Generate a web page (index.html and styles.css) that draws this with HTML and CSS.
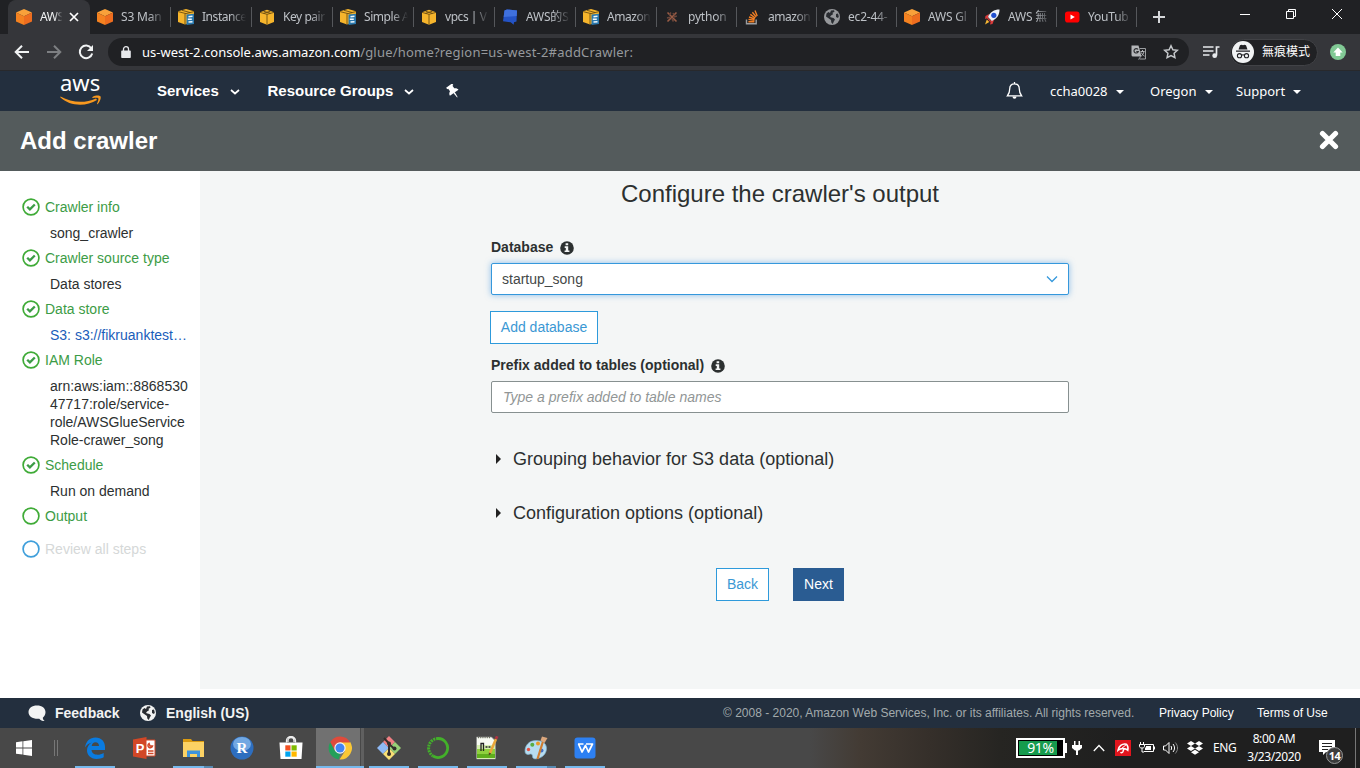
FILE: index.html
```html
<!DOCTYPE html>
<html lang="en">
<head>
<meta charset="utf-8">
<title>AWS Glue Console</title>
<link rel="stylesheet" href="styles.css">
</head>
<body>
<svg class="defs" aria-hidden="true">
  <symbol id="cube" viewBox="0 0 16 16"><path fill="#f9a13a" d="M8 0l8 3.500L8 7.200 0 3.500z"/><path fill="#f58220" d="M0 3.500l8 3.700V16l-8-3.400z"/><path fill="#ee6d1f" d="M16 3.500L8 7.200V16l8-3.400z"/></symbol>
  <symbol id="box" viewBox="0 0 16 16"><path fill="#f6b52c" d="M8 .8l7 2.400v9.900l-7 2.600-7-2.600V3.200z"/><path fill="none" stroke="#5d4310" stroke-width=".8" d="M1 3.400l7 1.900 7-1.900M8 5.300v10.200M4.500 2.200l7 2.100M11.500 2.200l-7 2.100"/></symbol>
  <symbol id="boxdoc" viewBox="0 0 16 16"><path fill="#f6b52c" d="M8 0l8 2.300V12L7 15.500 0 13V2.300z"/><path fill="none" stroke="#5d4310" stroke-width=".8" d="M0 2.600l8 2 8-2M7 4.600v10.500M4 1.300l8 2.200"/><path fill="#2a78ad" d="M8.500 5.500l7.500-.8V15l-7.500 1z"/><path stroke="#f2f9fd" stroke-width="1.500" d="M10.500 7.700l4-.4M9.800 10.300h4M10.500 13l4-.3"/></symbol>
  <symbol id="done" viewBox="0 0 18 18"><circle cx="9" cy="9" r="7.900" fill="none" stroke="#3fab37" stroke-width="1.700"/><path fill="none" stroke="#3c9c46" stroke-width="2.300" d="M5.200 8.700l2.700 2.700 4.900-4.900"/></symbol>
  <symbol id="info" viewBox="0 0 14 14"><circle cx="7" cy="7" r="6.800" fill="#2c3030"/><path fill="#f4f6f6" d="M5.600 2.300h2.600v2H5.600zM4.700 5.300h3.500v4.100h1.200v1.700H4.600V9.400h1.200V7H4.700z"/></symbol>
  <symbol id="globe" viewBox="0 0 16 16"><circle cx="8" cy="8" r="8" fill="currentColor"/><path class="land" d="M7 1.500l3-.3.500 1.500-2 1 .5 1.500-2 1.200-1 1.600 1.500.5 2 .4 1.500 1.600-1.200 2-1 2.500-1.500-1.500-.3-2.500-1.800-1.200L2 7.500l.5-3 2-1.500 1.500 1zM12 5l2-.5.8 3-.8 1.500-2-1z"/></symbol>
</svg>

<header class="browser">
  <div class="tabstrip">
    <div class="tab active"><svg class="fav"><use href="#cube"/></svg><span class="tab-title">AWS</span><svg class="tab-close" viewBox="0 0 10 10"><path d="M1 1l8 8M9 1L1 9"/></svg></div>
    <div class="tab"><svg class="fav"><use href="#cube"/></svg><span class="tab-title">S3 Man</span></div>
    <div class="tab"><svg class="fav"><use href="#boxdoc"/></svg><span class="tab-title snug">Instance</span></div>
    <div class="tab"><svg class="fav"><use href="#box"/></svg><span class="tab-title snug">Key pair</span></div>
    <div class="tab"><svg class="fav"><use href="#boxdoc"/></svg><span class="tab-title snug">Simple A</span></div>
    <div class="tab"><svg class="fav"><use href="#box"/></svg><span class="tab-title snug">vpcs | V</span></div>
    <div class="tab"><svg class="fav" viewBox="0 0 16 16"><path fill="#2453c5" d="M2.500 1.500L5 .5l10 1-.5 11-2.500.8-.3 2.500-3-2.500-7.700-1z"/><path fill="#3f70dd" d="M2.500 1.500L5 .5l10 1-.3 5.500L1.700 8z"/></svg><span class="tab-title">AWS的S</span></div>
    <div class="tab"><svg class="fav"><use href="#boxdoc"/></svg><span class="tab-title snug">Amazon</span></div>
    <div class="tab narrow"><svg class="fav" viewBox="0 0 16 16"><path fill="none" stroke="#9a5c45" stroke-width="1.600" d="M3.500 3.500l9 9M12.500 3.500l-9 9"/><path fill="none" stroke="#6b463b" stroke-width="1.500" d="M7 3.500l-2 2.500M12.800 7l-3 1M9.500 12.500L8 10M3 9l3-.8M9 4l1 2"/></svg><span class="tab-title">python</span></div>
    <div class="tab narrow"><svg class="fav" viewBox="0 0 16 16"><path fill="none" stroke="#9b9ea1" stroke-width="1.400" d="M2.500 10.500v4.300h9.700v-4.300"/><path stroke="#f48024" stroke-width="1.400" d="M4.400 12.700h6M4.500 10.400l6 .9M5 8l5.700 2M6.300 5.400l5 3.600M8.400 3.300l3.800 4.600M11 1.500l2.200 5.400"/></svg><span class="tab-title snug">amazon</span></div>
    <div class="tab narrow"><svg class="fav globe-tab"><use href="#globe"/></svg><span class="tab-title">ec2-44-</span></div>
    <div class="tab narrow"><svg class="fav"><use href="#cube"/></svg><span class="tab-title">AWS Gl</span></div>
    <div class="tab narrow"><svg class="fav" viewBox="0 0 16 16"><path fill="#d93a3a" d="M5 5L1.500 7 1 10l3-1zM10 11l-1.500 4-2.500.5 1-4z"/><path fill="#eef2f8" d="M15.500.5C10 .5 6 3 4 8l3.800 4C13 9.500 15.500 6 15.500.5z"/><path fill="#d93a3a" d="M3.800 8.500l3.500 3.600-1 1L3 9.500z"/><path fill="#f7b733" d="M2.800 10.500l2.500 2.500L1 15.500z"/><circle cx="9.800" cy="6.300" r="2.600" fill="#1f4fd0"/></svg><span class="tab-title">AWS 無</span></div>
    <div class="tab narrow"><svg class="fav" viewBox="0 0 16 16"><rect x="1" y="2.500" width="14.500" height="11" rx="2.800" fill="#f00"/><path fill="#fff" d="M6.500 5.500l4.300 2.500-4.300 2.500z"/></svg><span class="tab-title">YouTub</span></div>
    <svg class="newtab" viewBox="0 0 14 14"><path d="M7 1v12M1 7h12"/></svg>
    <div class="winctl">
      <svg viewBox="0 0 12 12"><path d="M1 6.500h10"/></svg>
      <svg viewBox="0 0 12 12"><path d="M1.500 3.500h7v7h-7zM3.500 3.500v-2h7v7h-2"/></svg>
      <svg viewBox="0 0 12 12"><path d="M1 1l10 10M11 1L1 11"/></svg>
    </div>
  </div>
  <div class="toolbar">
    <div class="nav-buttons">
      <svg viewBox="0 0 16 16"><path d="M15 8H2M8 1.700L1.700 8 8 14.300"/></svg>
      <svg class="dim" viewBox="0 0 16 16"><path d="M1 8h13M8 1.700L14.300 8 8 14.300"/></svg>
      <svg viewBox="0 0 16 16"><path d="M13.300 4.300A6.300 6.300 0 1 0 14.200 9.500"/><path class="solid" d="M15 1v6H9z"/></svg>
    </div>
    <div class="omnibox">
      <svg class="lock" viewBox="0 0 10 12"><path fill="#e8eaed" d="M1 4.500h8a.8.800 0 0 1 .8.800v5.900a.8.800 0 0 1-.8.800H1a.8.800 0 0 1-.8-.8V5.300A.8.800 0 0 1 1 4.500z"/><path fill="none" stroke="#e8eaed" stroke-width="1.300" d="M2.500 5V3a2.500 2.300 0 0 1 5 0v2"/></svg>
      <span class="url"><span class="host">us-west-2.console.aws.amazon.com</span><span class="path">/glue/home?region=us-west-2#addCrawler:</span></span>
      <svg class="translate" viewBox="0 0 15 15"><path fill="#b4b6b9" d="M.5.500h7l3 11H2A1.500 1.500 0 0 1 .5 10z"/><path fill="none" stroke="#9a9da0" d="M8.500 3.500h6v10.500H8.500M7.500 14.500L10 11"/><path fill="none" stroke="#b4b6b9" d="M9.500 6.500h4M11.500 5v1.500M13 6.500c-.5 2-1.500 3.500-2.500 4.300M10.300 7.500c.5 1.500 1.500 2.500 3.200 3.600"/><path fill="none" stroke="#303134" stroke-width="1.200" d="M7 4.500A2.200 2.200 0 1 0 7.300 6.500H5.300"/></svg>
      <svg class="star" viewBox="0 0 16 16"><path d="M8 1.800l1.900 4 4.400.5-3.200 3 .8 4.300L8 11.500l-3.900 2.100.8-4.300-3.200-3 4.400-.5z"/></svg>
    </div>
    <svg class="media" viewBox="0 0 17 14"><path fill="none" stroke="#e8eaed" stroke-width="1.700" d="M0 2h10.500M0 6h10.500M0 10h6.500M16.500 2h-3v8.500"/><circle cx="11.700" cy="10.700" r="2.400" fill="#e8eaed"/></svg>
    <div class="incognito">
      <svg viewBox="0 0 22 22"><circle cx="11" cy="11" r="11" fill="#f1f3f4"/><path fill="#202124" d="M4 9.500h14v1.200H4zM6.500 8.400l1.500-4.200 1.700-.4 1.300.4 1.300-.4 1.700.4 1.500 4.200z"/><path fill="none" stroke="#202124" stroke-width="1.100" d="M9.500 14.200c1-.6 2-.6 3 0"/><circle cx="7.500" cy="14.700" r="2.100" fill="none" stroke="#202124" stroke-width="1.100"/><circle cx="14.500" cy="14.700" r="2.100" fill="none" stroke="#202124" stroke-width="1.100"/></svg>
      <span>無痕模式</span>
    </div>
    <svg class="update" viewBox="0 0 16 16"><circle cx="8" cy="8" r="8" fill="#81c995"/><path fill="#fff" d="M8 3.500l4.700 5H10.300v3.500H5.700V8.500H3.300z"/></svg>
  </div>
</header>

<nav class="awsnav">
  <div class="logo"><span>aws</span><svg viewBox="0 0 42 11"><path fill="#f7981f" d="M.5 1.500C12 8 25 8.500 36 3.500l1 1.500C26 12 10 11.500.2 2.300z"/><path fill="#f7981f" d="M32.500 2c2.500-1.700 7-1.800 7.900-.7s0 5-2.700 7.700c-.5.400-.9.100-.6-.5 1-2.300 1.700-4.700 1.200-5.300S35 2.700 33 2.900c-.8.100-1-.4-.5-.9z"/></svg></div>
  <div class="menu services">Services<svg viewBox="0 0 10 6"><path d="M1 1l4 3.500L9 1"/></svg></div>
  <div class="menu groups">Resource Groups<svg viewBox="0 0 10 6"><path d="M1 1l4 3.500L9 1"/></svg></div>
  <svg class="pin" viewBox="0 0 14 14"><g transform="rotate(-35 7 7)"><path fill="#fff" d="M3.300.3h7.400v2H9.600v3.200c1.700.8 2.600 2 2.600 3.600H1.800c0-1.600.9-2.800 2.600-3.600V2.300H3.300z"/><path fill="#fff" d="M6.200 8.800h1.600L7.300 14.600h-.6z"/></g></svg>
  <svg class="bell" viewBox="0 0 17 18"><path fill="none" stroke="#fff" stroke-width="1.300" d="M8.500 1.800c-3.200 0-4.800 2.200-4.800 5.200 0 4-1 5.200-2.300 6.800h14.200c-1.300-1.600-2.300-2.800-2.300-6.800 0-3-1.600-5.200-4.800-5.200zM8.500 0v2"/><path fill="#fff" d="M6.500 14.500h4a2 2.300 0 0 1-4 0z"/></svg>
  <div class="acct user">ccha0028<i></i></div>
  <div class="acct region">Oregon<i></i></div>
  <div class="acct support">Support<i></i></div>
</nav>

<div class="titlebar">
  <h1>Add crawler</h1>
  <svg viewBox="0 0 20 20"><path d="M3.500 3.500l13 13M16.500 3.500l-13 13"/></svg>
</div>

<main class="wizard">
  <aside class="steps">
    <div class="step"><svg><use href="#done"/></svg><h2>Crawler info</h2><p>song_crawler</p></div>
    <div class="step"><svg><use href="#done"/></svg><h2>Crawler source type</h2><p>Data stores</p></div>
    <div class="step"><svg><use href="#done"/></svg><h2>Data store</h2><p class="link">S3: s3://fikruanktest…</p></div>
    <div class="step"><svg><use href="#done"/></svg><h2>IAM Role</h2><p>arn:aws:iam::8868530<br>47717:role/service-<br>role/AWSGlueService<br>Role-crawer_song</p></div>
    <div class="step"><svg><use href="#done"/></svg><h2>Schedule</h2><p>Run on demand</p></div>
    <div class="step current"><svg viewBox="0 0 18 18"><circle cx="9" cy="9" r="7.900" fill="none" stroke="#3fab37" stroke-width="1.700"/></svg><h2>Output</h2></div>
    <div class="step pending"><svg viewBox="0 0 18 18"><circle cx="9" cy="9" r="7.900" fill="none" stroke="#3f9fdb" stroke-width="1.700"/></svg><h2>Review all steps</h2></div>
  </aside>
  <section class="content">
    <h2 class="page-title">Configure the crawler's output</h2>
    <div class="form">
      <div class="label">Database<svg><use href="#info"/></svg></div>
      <div class="select"><span>startup_song</span><svg viewBox="0 0 12 8"><path d="M1 1.500l5 5 5-5"/></svg></div>
      <div class="btn add">Add database</div>
      <div class="label">Prefix added to tables (optional)<svg><use href="#info"/></svg></div>
      <div class="input">Type a prefix added to table names</div>
      <div class="expander first"><i></i><span>Grouping behavior for S3 data (optional)</span></div>
      <div class="expander"><i></i><span>Configuration options (optional)</span></div>
      <div class="actions"><div class="btn back">Back</div><div class="btn next">Next</div></div>
    </div>
  </section>
</main>

<footer class="awsfooter">
  <svg class="bubble" viewBox="0 0 18 17"><path fill="#f2f3f3" d="M9 .5c5 0 8.500 2.700 8.500 6.500 0 2.600-1 4.300-2.700 5.700.1 1.500.8 2.500 2 3.300-2.500 0-4.500-.8-5.500-2.300C4.800 14.200.5 11.500.5 7 .5 3.200 4 .5 9 .5z"/></svg>
  <b class="feedback">Feedback</b>
  <svg class="globe-foot"><use href="#globe"/></svg>
  <b class="lang">English (US)</b>
  <span class="copy">© 2008 - 2020, Amazon Web Services, Inc. or its affiliates. All rights reserved.</span>
  <span class="legal">Privacy Policy</span>
  <span class="legal terms">Terms of Use</span>
</footer>

<div class="taskbar">
  <div class="start"><svg viewBox="0 0 16 16"><path fill="#fff" d="M0 2.300L6.500 1.300v6.200H0zM7.300 1.200L16 0v7.500H7.300zM0 8.400h6.500v6.200L0 13.700zM7.300 8.400H16V16l-8.700-1.200z"/></svg><i class="grip"></i></div>
  <div class="app run"><svg viewBox="0 0 24 24"><path fill="#0a7be0" fill-rule="evenodd" d="M2 11.500C3 5 7 1.500 12.500 1.500c6 0 9.500 4.300 9.500 9.500v3H8.500c.2 3 2.700 4.700 6 4.700 2.300 0 4.300-.6 6.200-1.800v4.400c-2 1-4.300 1.600-7.200 1.600C7.300 22.900 4 19 4 14.300c0-3.500 2-6.300 5-7.800C5.800 7 3.500 9 2 11.500zM8.700 10h7.300c0-2.300-1.300-3.700-3.500-3.700-2.100 0-3.500 1.600-3.800 3.700z"/></svg></div>
  <div class="app"><svg viewBox="0 0 24 24"><path fill="#fff" stroke="#d24726" d="M13 4h10v16H13z"/><path fill="#d24726" d="M1 3.500L14.500 1v22L1 20.500z"/><path fill="none" stroke="#d24726" stroke-width="1.500" d="M17 7.500a2.300 2.300 0 1 0 3.500 2.500H18zM16 15h5.500M16 17.500h5.500"/><text x="3.800" y="16.500" class="ppt">P</text></svg></div>
  <div class="app run grouped"><svg viewBox="0 0 24 24"><path fill="#dc9b10" d="M2 3h8l1.500 2H23v3H2z"/><path fill="#fcd264" d="M2 6h21v15H2z"/><path fill="#3e93dc" d="M6 21v-6.500h13V21h-3v-3H9v3z"/></svg></div>
  <div class="app"><svg viewBox="0 0 24 24"><circle cx="12" cy="12" r="11.500" fill="#2d6ebf"/><ellipse cx="12" cy="8" rx="9" ry="7" fill="#72a8e2"/><text x="6.500" y="17" class="rlang">R</text></svg></div>
  <div class="app"><svg viewBox="0 0 24 24"><path fill="none" stroke="#eee" stroke-width="1.300" d="M7.500 6.500V4.500a4.500 4 0 0 1 9 0v2M9 6V4.500a3 3 0 0 1 6 0V6"/><path fill="#fff" d="M.5 6.500h23L22.500 23h-21z"/><path fill="#f25022" d="M6.300 9.300h5.200v5.200H6.300z"/><path fill="#7fba00" d="M12.500 9.300h5.200v5.200h-5.200z"/><path fill="#00a4ef" d="M6.300 15.500h5.200v5.200H6.300z"/><path fill="#ffb900" d="M12.500 15.500h5.200v5.200h-5.200z"/></svg></div>
  <div class="app run focused"><svg viewBox="0 0 24 24"><path fill="#fbc835" d="M12 12V6h10.200A11.500 11.500 0 0 1 11.500 23.500L17 15z"/><path fill="#de4b3c" d="M2.200 6.200A11.500 11.500 0 0 1 22.200 6.500H12L7 15z"/><path fill="#24a05a" d="M2.200 6.200L7 15l5.500 2.500-2 5.900A11.500 11.500 0 0 1 2.200 6.200z"/><circle cx="12" cy="12" r="5.700" fill="#f4f4f4"/><circle cx="12" cy="12" r="4.500" fill="#4285f4"/></svg></div>
  <div class="app run"><svg viewBox="0 0 24 24"><path fill="#f07f83" d="M12 0l6 6-6 6-6-6z"/><path fill="#8eb9f5" d="M6 6l6 6-6 6-6-6z"/><path fill="#97d077" d="M18 6l6 6-6 6-6-6z"/><path fill="#f8df75" d="M12 12l6 6-6 6-6-6z"/><path fill="none" stroke="#332e2c" stroke-width="2" d="M7 2l5 5.500V18M12 8l5 4.500"/><circle cx="12" cy="7.500" r="2" fill="#332e2c"/><circle cx="12" cy="18" r="2" fill="#332e2c"/><circle cx="17.500" cy="12.500" r="2" fill="#332e2c"/></svg></div>
  <div class="app run"><svg viewBox="0 0 24 24"><path fill="none" stroke="#43b02a" stroke-width="2.800" d="M12 2.500a9.500 9.500 0 1 1-5 17.500"/><path fill="none" stroke="#43b02a" stroke-width="3" stroke-dasharray="2 .8" d="M12 2.500A9.500 9.500 0 0 0 7 20"/></svg></div>
  <div class="app run"><svg viewBox="0 0 24 24"><path fill="#f7faf2" stroke="#8a8a8a" stroke-width=".7" d="M1.500 1h15l4 4v18h-19z"/><path fill="#d6efb0" d="M2 9h18v14H2z"/><path fill="#8fd03e" d="M2 13h18v9H2z"/><path fill="#5fae1c" d="M2 18h18v4H2z"/><path fill="none" stroke="#222" stroke-width="1.300" d="M6 15V7.500h2.500V15"/><path stroke="#222" stroke-width="1.500" stroke-dasharray="2 1" d="M10.500 11h6"/><path stroke="#6b6f60" stroke-dasharray="1 1.200" stroke-width="1.400" d="M3 1.500h13"/><path stroke="#e8a63a" stroke-width="2.600" d="M21 3L15 17"/><path fill="#554022" d="M13.800 16.500l2.400 1-2.400 2z"/><path stroke="#ae3443" stroke-width="2.800" d="M22.200.3L21 3"/></svg></div>
  <div class="app run grouped"><svg viewBox="0 0 24 24"><path fill="#b7dcf0" stroke="#7fb3d0" stroke-width=".7" d="M12 4.500C5 4.500 1 9.500 1 15c0 3 2 4 4.500 3.200 2-.7 3 .3 3 2 0 2 1.500 3 4 2.600 6-.8 10-5.300 10-10.300s-4-8-10.500-8z"/><circle cx="4.500" cy="13.500" r="1.700" fill="#e85042"/><circle cx="8.300" cy="8.800" r="2" fill="#58ae44"/><circle cx="14" cy="7.500" r="2" fill="#eb9a27"/><circle cx="17.500" cy="14.500" r="2" fill="#406fc4"/><path stroke="#cf7d31" stroke-width="2.200" d="M19 5.500L13.500 23"/><path fill="#dba77d" d="M16.500 4.500L18 .5l5.500 1.500-3 5z"/></svg></div>
  <div class="app run"><svg viewBox="0 0 24 24"><rect x="1.500" y="1.500" width="21" height="21" rx="3" fill="#2d80f2"/><path fill="none" stroke="#fff" stroke-width="1.700" stroke-linejoin="round" d="M5 8h5.500M5.500 8L9 16l3.500-6.500L15.500 16 19.500 8H13"/></svg></div>

  <div class="tray">
    <div class="battery"><span>91%</span></div>
    <svg class="plug" viewBox="0 0 10 14"><path fill="#fff" d="M2 0h1.500v4h3V0H8v4h2v3L7 9.500H6V14H4V9.500H3L0 7V4h2z"/></svg>
    <svg class="caret" viewBox="0 0 12 8"><path d="M.8 7L6 1.500 11.200 7"/></svg>
    <svg class="avira" viewBox="0 0 16 16"><path fill="#e1151d" d="M0 0h16v16H0z"/><path fill="none" stroke="#fff" stroke-width="1.500" d="M3 10.300C3.500 6.500 7 3.200 11.500 4.300c1.500 1.700 1.800 4 1.300 6C10.500 8 6 7.500 3 10.300zM9 8.500L7.800 12c-.5 1-1.800.9-2.200.2"/><path stroke="#fff" d="M11.500 4.500L6.500 8.500"/></svg>
    <svg class="batt-s" viewBox="0 0 16 12"><path fill="none" stroke="#fff" d="M5.500 2.500h9v7H5M1.500 0v2.500M4.500 0v2.500M.5 2.500h5v2c0 1-1 1.500-2.500 1.500S.5 5.500.5 4.500zM3 6v4h2"/><path fill="#fff" d="M7 4h5v4H6V6l1-1zM15 4.500h1v3h-1z"/></svg>
    <svg class="speaker" viewBox="0 0 16 14"><path fill="none" stroke="#fff" d="M.5 5h2L6 1.500v11L2.500 9h-2z"/><path fill="none" stroke="#fff" d="M8 5c.8 1.300.8 2.700 0 4M10 3c2 2.500 2 5.500 0 8"/><path fill="none" stroke="#888" d="M12.300 1.500c3 3.500 3 7.500 0 11"/></svg>
    <svg class="dropbox" viewBox="0 0 16 14"><path fill="#fff" d="M4 0l4 2.500L4 5 0 2.500zM12 0l4 2.500L12 5 8 2.500zM4 5l4 2.500L4 10 0 7.500zM12 5l4 2.500-4 2.500-4-2.500zM8 8.800l4 2.500-4 2.500-4-2.500z"/></svg>
    <span class="ime">ENG</span>
    <div class="clock"><span>8:00 AM</span><span>3/23/2020</span></div>
    <svg class="notify" viewBox="0 0 26 26"><path fill="#fff" d="M0 2h16v12H7l-3 3v-3H0z"/><path stroke="#222" stroke-width="1.200" d="M3 5.500h10M3 8.500h10M3 11.500h6"/><circle cx="15.500" cy="17.500" r="8" fill="#3c3c3c" stroke="#999"/><text x="9.700" y="21.500" class="count">14</text></svg>
    <i class="peek"></i>
  </div>
</div>
</body>
</html>
```
FILE: styles.css
```css
* { box-sizing: border-box; }
body { margin: 0; width: 1360px; height: 768px; overflow: hidden; display: flex; flex-direction: column; background: #fff; color: #2c3030; font: 14px/18px "Liberation Sans", Arial, sans-serif; }
h1, h2, p { margin: 0; font-weight: normal; }
svg { display: block; flex: none; }
.defs { display: none; }

/* Browser chrome */
.browser { flex: none; height: 71px; background: #35363a; border-bottom: 1px solid #28292c; font-family: "Noto Sans", "Noto Sans CJK TC", sans-serif; }
.tabstrip { display: flex; height: 34px; padding-left: 9px; background: #202124; }
.tab { display: flex; align-items: center; width: 81px; padding-left: 7px; position: relative; }
.tab.narrow { width: 80px; }
.tab:not(.active)::after { content: ""; position: absolute; right: 0; top: 7px; width: 1px; height: 20px; background: #55575b; }
.tab.active { background: #35363a; border-radius: 8px 8px 0 0; box-shadow: -1px 0 #35363a; }
.fav { width: 16px; height: 16px; }
.globe-tab { color: #96989b; }
.land { fill: #292c31; }
.tab-title { width: 45px; margin-left: 8px; overflow: hidden; white-space: nowrap; font-size: 12px; letter-spacing: -.2px; color: #bdc1c6; -webkit-mask-image: linear-gradient(90deg, #000 62%, transparent 98%); mask-image: linear-gradient(90deg, #000 62%, transparent 98%); }
.tab-title.snug { letter-spacing: -.45px; }
.active .tab-title { width: 23px; letter-spacing: -.4px; color: #f1f3f4; }
.tab-close { width: 10px; height: 10px; margin-left: 6px; stroke: #fff; stroke-width: 1.7; }
.newtab { width: 14px; height: 14px; margin: 10px 0 0 15px; stroke: #d5d7da; stroke-width: 2; }
.winctl { display: flex; gap: 34px; margin: 8px 0 0 73px; }
.winctl svg { width: 12px; height: 12px; fill: none; stroke: #fff; }
.toolbar { display: flex; align-items: center; height: 36px; }
.nav-buttons { display: flex; gap: 16px; width: 108px; padding-left: 14px; }
.nav-buttons svg { width: 16px; height: 16px; fill: none; stroke: #f1f3f4; stroke-width: 2; }
.nav-buttons .dim { stroke: #7d7f82; }
.nav-buttons .solid { fill: #f1f3f4; stroke: none; }
.omnibox { display: flex; align-items: center; width: 1081px; height: 28px; padding-left: 13px; border-radius: 14px; background: #202124; }
.lock { width: 10px; height: 12px; }
.url { width: 1000px; padding-left: 11px; font-size: 13px; white-space: nowrap; }
.host { color: #fff; }
.path { color: #96999d; letter-spacing: .2px; }
.translate { width: 15px; height: 15px; }
.star { width: 16px; height: 16px; margin-left: 17px; fill: none; stroke: #c5c8cb; stroke-width: 1.5; }
.media { width: 17px; height: 14px; margin-left: 14px; }
.incognito { display: flex; align-items: center; width: 88px; height: 27px; margin-left: 10px; padding-left: 1px; border: 1px solid #414246; border-radius: 14px; background: #202124; color: #fff; font-size: 12px; }
.incognito svg { width: 22px; height: 22px; margin-right: 8px; }
.update { width: 16px; height: 16px; margin-left: 12px; }

/* Console navigation */
.awsnav { display: flex; align-items: center; flex: none; height: 40px; padding-left: 60px; background: #232f3e; color: #fff; }
.logo { width: 97px; height: 36px; }
.logo span { display: block; height: 20px; font: 22px/19px "Noto Sans", sans-serif; }
.logo svg { width: 42px; height: 11px; margin-top: 2px; }
.menu { display: flex; align-items: center; font-size: 15px; font-weight: bold; }
.menu svg { width: 10px; height: 6px; margin: 2px 0 0 11px; fill: none; stroke: #fff; stroke-width: 1.7; }
.services { width: 110.5px; }
.groups { width: 178.5px; }
.pin { width: 14px; height: 14px; }
.bell { width: 17px; height: 18px; margin-left: 546px; }
.acct { display: flex; align-items: center; font: 13px/18px "Noto Sans", sans-serif; }
.acct i { margin: 1px 0 0 8px; border: 4px solid transparent; border-top-color: #fff; border-bottom: 0; }
.user { width: 100px; margin-left: 27px; }
.region { width: 86px; }
.titlebar { display: flex; align-items: center; justify-content: space-between; flex: none; height: 60px; padding: 0 21px 0 20px; background: #545b5c; color: #fff; }
.titlebar h1 { font: bold 24px/28px "Liberation Sans", Arial, sans-serif; }
.titlebar svg { width: 20px; height: 20px; margin-top: -2px; stroke: #fff; stroke-width: 5.2; stroke-linecap: round; }

/* Wizard */
.wizard { display: flex; flex: none; height: 518px; }
.steps { width: 200px; padding: 27px 0 0 22px; }
.step { display: grid; grid-template-columns: 18px 1fr; column-gap: 5px; margin-bottom: 7px; color: #3c9c46; }
.step svg { width: 18px; height: 18px; }
.step h2 { font-size: 14px; line-height: 18px; }
.step p { grid-column: 1 / 3; margin: 8px 0 0 28px; color: #2c3030; white-space: nowrap; }
.step .link { color: #1a5dba; }
.step.current { margin-bottom: 15px; }
.step.pending h2 { color: #d5d8d8; }
.content { flex: 1; background: #f4f6f6; }
.page-title { padding-top: 9px; font-size: 24px; line-height: 28px; text-align: center; }
.form { width: 578px; margin: 30px auto 0; }
.label { display: flex; align-items: center; height: 18px; font-weight: bold; }
.label svg { width: 14px; height: 14px; margin: 1px 0 0 7px; }
.select { display: flex; align-items: center; justify-content: space-between; height: 32px; margin-top: 7px; padding: 0 10px; border: 1px solid #3598dc; border-radius: 2px; background: #fff; color: #444848; box-shadow: 0 0 6px rgba(53, 140, 220, .55); }
.select svg { width: 12px; height: 8px; fill: none; stroke: #3598dc; stroke-width: 1.3; }
.btn { display: flex; align-items: center; justify-content: center; height: 33px; padding-bottom: 1px; border: 1px solid #2e9adb; background: #fff; color: #3b98d4; }
.add { width: 108px; margin: 16px 0 12px -1px; }
.input { display: flex; align-items: center; height: 32px; margin-top: 7px; padding-left: 11px; border: 1px solid #879090; border-radius: 2px; background: #fff; color: #919696; font-style: italic; }
.expander { display: flex; align-items: center; height: 24px; margin-top: 30px; padding-left: 5px; font-size: 18px; }
.expander.first { margin-top: 34px; }
.expander i { margin-right: 12px; border: 5px solid transparent; border-left-color: #222; border-right: 0; }
.actions { display: flex; justify-content: center; gap: 24px; margin-top: 43px; }
.back { width: 53px; }
.next { width: 51px; border-color: #2a5c92; background: #2a5c92; color: #fff; }

/* Console footer */
.awsfooter { display: flex; align-items: center; flex: none; height: 30px; margin-top: 9px; padding-left: 28px; background: #232f3e; color: #f2f3f3; }
.bubble { width: 18px; height: 17px; margin-right: 9px; }
.feedback { width: 85px; }
.globe-foot { width: 16px; height: 16px; margin-right: 10px; color: #f2f3f3; }
.lang { width: 557px; }
.copy { width: 436px; font-size: 12px; color: #a2aaac; white-space: nowrap; }
.legal { width: 98px; font-size: 12px; color: #fff; white-space: nowrap; }

/* Desktop taskbar */
.taskbar { display: flex; flex: none; height: 40px; background: linear-gradient(90deg, #484848 0, #484848 810px, #433b34 860px, #352f2a 930px, #262522 1000px, #1f1f1f 1120px); color: #fff; }
.start { display: flex; align-items: center; width: 71px; padding-left: 16px; }
.start svg { width: 16px; height: 16px; }
.grip { width: 4px; height: 16px; margin-left: 22px; border: 1px solid #777; border-width: 0 1px; }
.app { display: flex; align-items: center; justify-content: center; width: 49px; height: 40px; padding-right: 1px; position: relative; }
.app svg { width: 24px; height: 24px; }
.app.run::after { content: ""; position: absolute; left: 4px; bottom: 0; width: 40px; height: 2px; background: #76b9ed; }
.app.grouped::after { background: linear-gradient(90deg, #76b9ed 31px, #5789b0 31px); }
.app.focused { background: linear-gradient(90deg, #717171 44px, #484848 44px, #484848 45px, #606060 45px, #606060 48px, #484848 48px); }
.app.focused::after { left: 0; width: 48px; }
.ppt { font: bold 13px "Liberation Sans", sans-serif; fill: #fff; }
.rlang { font: bold 15px "Liberation Serif", serif; fill: #fff; }
.tray { display: flex; align-items: center; margin-left: 406px; font: 12px/18px "Noto Sans", sans-serif; }
.battery { width: 49px; height: 20px; border: 2px solid #fff; padding: 1px; background: #000; position: relative; }
.battery::after { content: ""; position: absolute; right: -4px; top: 3px; width: 2px; height: 10px; background: #fff; }
.battery span { display: block; width: 38px; height: 14px; padding-left: 5px; background: #169b4d; font-size: 14px; line-height: 14px; text-align: center; letter-spacing: -.3px; }
.plug { width: 10px; height: 14px; margin-left: 7px; }
.caret { width: 12px; height: 8px; margin-left: 11px; fill: none; stroke: #fff; stroke-width: 1.3; }
.avira { width: 16px; height: 16px; margin-left: 10px; }
.batt-s { width: 16px; height: 12px; margin-left: 8px; }
.speaker { width: 16px; height: 14px; margin-left: 8px; }
.dropbox { width: 16px; height: 14px; margin-left: 8px; }
.ime { width: 35px; padding-left: 10px; font-size: 12px; letter-spacing: -.4px; }
.clock { display: flex; flex-direction: column; width: 72px; margin-bottom: 1px; text-align: center; letter-spacing: -.4px; }
.notify { width: 26px; height: 26px; margin: 5px 0 0 9px; }
.count { font: bold 11px "Noto Sans", sans-serif; fill: #fff; letter-spacing: -.5px; }
.peek { width: 1px; height: 40px; margin-left: 10px; background: #777; }
```
